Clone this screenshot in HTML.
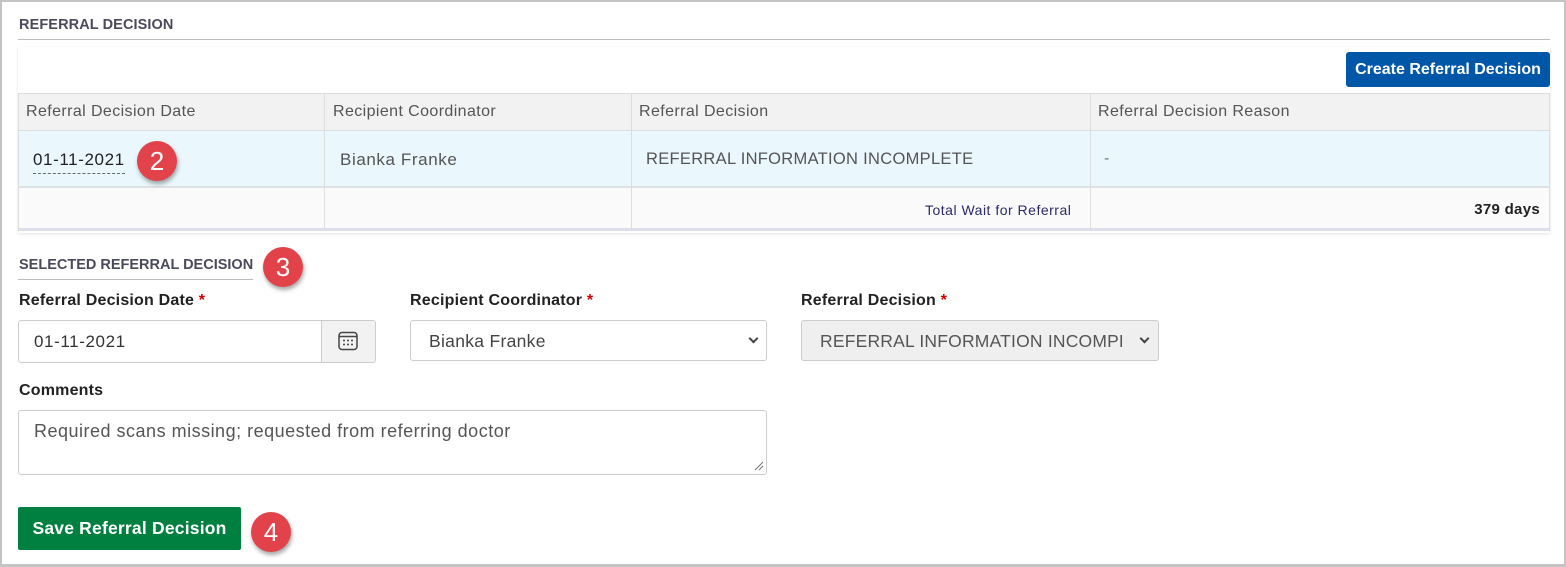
<!DOCTYPE html>
<html><head><meta charset="utf-8"><style>
*{box-sizing:border-box;margin:0;padding:0}
body{width:1566px;height:567px;background:#fff;font-family:"Liberation Sans",sans-serif;position:relative;overflow:hidden;color:#333}
.frame{position:absolute;left:0;top:0;width:1566px;height:567px;border:2px solid #c4c4c4;border-bottom-width:3px}
.a{position:absolute;white-space:nowrap}
.h{font-weight:bold;font-size:14.5px;color:#4a4a5c;letter-spacing:0.1px}
.badge{position:absolute;width:40px;height:40px;border-radius:50%;background:#e2434a;color:#fff;font-size:26px;text-align:center;line-height:40px;box-shadow:1px 3px 4px rgba(0,0,0,.35)}
.lbl{font-weight:bold;font-size:16px;color:#222;letter-spacing:0.2px}
.lbl span{color:#c00}
.box{position:absolute;border:1px solid #ccc;border-radius:3px;background:#fff}
.th{font-size:16px;color:#555;letter-spacing:0.4px}
.chev{position:absolute;width:7px;height:7px;border-right:2px solid #444;border-bottom:2px solid #444;transform:rotate(45deg)}
</style></head><body>
<div class="frame"></div>
<div class="a h" style="left:19px;top:17px">REFERRAL DECISION</div>
<div class="a" style="left:18px;top:39px;width:1532px;height:1px;background:#bbb"></div>

<div class="a" style="left:18px;top:47px;width:1532px;height:186px;background:#fff;box-shadow:0 1px 3px rgba(0,0,0,.12)"></div>
<div class="a" style="left:1346px;top:52px;width:204px;height:35px;background:#0057a8;border-radius:3px;color:#fff;font-weight:bold;font-size:16px;text-align:center;line-height:35px">Create Referral Decision</div>

<div class="a" style="left:18px;top:93px;width:1532px;height:38px;background:#f2f2f2;border-top:1px solid #ddd;border-bottom:1px solid #ddd"></div>
<div class="a" style="left:18px;top:131px;width:1532px;height:57px;background:#eaf7fd;border-bottom:2px solid #dde0e4"></div>
<div class="a" style="left:18px;top:188px;width:1532px;height:43px;background:#fafafa;border-bottom:3px solid #dde0e8"></div>
<div class="a" style="left:18px;top:93px;width:1px;height:138px;background:#ddd"></div>
<div class="a" style="left:324px;top:93px;width:1px;height:138px;background:#ddd"></div>
<div class="a" style="left:631px;top:93px;width:1px;height:138px;background:#ddd"></div>
<div class="a" style="left:1090px;top:93px;width:1px;height:138px;background:#ddd"></div>
<div class="a" style="left:1549px;top:93px;width:1px;height:138px;background:#ddd"></div>

<div class="a th" style="left:26px;top:103px">Referral Decision Date</div>
<div class="a th" style="left:333px;top:103px">Recipient Coordinator</div>
<div class="a th" style="left:639px;top:103px">Referral Decision</div>
<div class="a th" style="left:1098px;top:103px">Referral Decision Reason</div>

<div class="a" style="left:33px;top:150px;font-size:17px;letter-spacing:0.6px;color:#222;border-bottom:1px dashed #667;padding-bottom:3px">01-11-2021</div>
<div class="badge" style="left:137px;top:141px">2</div>
<div class="a" style="left:340px;top:150px;font-size:17px;letter-spacing:0.6px;color:#555">Bianka Franke</div>
<div class="a" style="left:646px;top:150px;font-size:16.5px;letter-spacing:0.3px;color:#555">REFERRAL INFORMATION INCOMPLETE</div>
<div class="a" style="left:1104px;top:150px;font-size:16px;color:#777">-</div>
<div class="a" style="left:925px;top:202px;font-size:14px;letter-spacing:0.5px;color:#2a2a6a">Total Wait for Referral</div>
<div class="a" style="right:26px;top:201px;font-size:15px;letter-spacing:0.3px;font-weight:bold;color:#222">379 days</div>

<div class="a h" style="left:19px;top:257px;letter-spacing:0">SELECTED REFERRAL DECISION</div>
<div class="a" style="left:18px;top:279px;width:235px;height:1px;background:#bbb"></div>
<div class="badge" style="left:263px;top:247px">3</div>

<div class="a lbl" style="left:19px;top:292px">Referral Decision Date <span>*</span></div>
<div class="a lbl" style="left:410px;top:292px">Recipient Coordinator <span>*</span></div>
<div class="a lbl" style="left:801px;top:292px">Referral Decision <span>*</span></div>

<div class="box" style="left:18px;top:320px;width:358px;height:43px"></div>
<div class="a" style="left:321px;top:321px;width:54px;height:41px;background:#f2f2f2;border-left:1px solid #ccc;border-radius:0 3px 3px 0"></div>
<svg class="a" style="left:337px;top:330px" width="22" height="22" viewBox="0 0 22 22"><rect x="2" y="2.5" width="18" height="17" rx="3" fill="none" stroke="#444" stroke-width="1.5"/><line x1="2" y1="6.5" x2="20" y2="6.5" stroke="#444" stroke-width="1.5"/><g fill="#444"><circle cx="7" cy="10.5" r="1"/><circle cx="11" cy="10.5" r="1"/><circle cx="15" cy="10.5" r="1"/><circle cx="7" cy="14.5" r="1"/><circle cx="11" cy="14.5" r="1"/><circle cx="15" cy="14.5" r="1"/></g></svg>
<div class="a" style="left:34px;top:332px;font-size:17px;letter-spacing:0.6px;color:#333">01-11-2021</div>

<div class="box" style="left:410px;top:320px;width:357px;height:41px"></div>
<div class="a" style="left:429px;top:331px;font-size:17.5px;letter-spacing:0.3px;color:#444">Bianka Franke</div>
<div class="chev" style="left:750px;top:335px"></div>

<div class="box" style="left:801px;top:320px;width:358px;height:41px;background:#efefef"></div>
<div class="a" style="left:820px;top:331px;font-size:17.5px;letter-spacing:0.2px;color:#555;width:302px;overflow:hidden">REFERRAL INFORMATION INCOMPLETE</div>
<div class="chev" style="left:1141px;top:335px"></div>

<div class="a lbl" style="left:19px;top:382px">Comments</div>
<div class="box" style="left:18px;top:410px;width:749px;height:65px"></div>
<div class="a" style="left:34px;top:421px;font-size:18px;letter-spacing:0.5px;color:#555">Required scans missing; requested from referring doctor</div>
<svg class="a" style="left:754px;top:461px" width="10" height="10"><line x1="1" y1="9" x2="9" y2="1" stroke="#777"/><line x1="5" y1="9" x2="9" y2="5" stroke="#777"/></svg>

<div class="a" style="left:18px;top:507px;width:223px;height:43px;background:#008040;border-radius:2px;color:#fff;font-weight:bold;font-size:17.5px;letter-spacing:0.2px;text-align:center;line-height:43px">Save Referral Decision</div>
<div class="badge" style="left:251px;top:512px">4</div>
</body></html>
